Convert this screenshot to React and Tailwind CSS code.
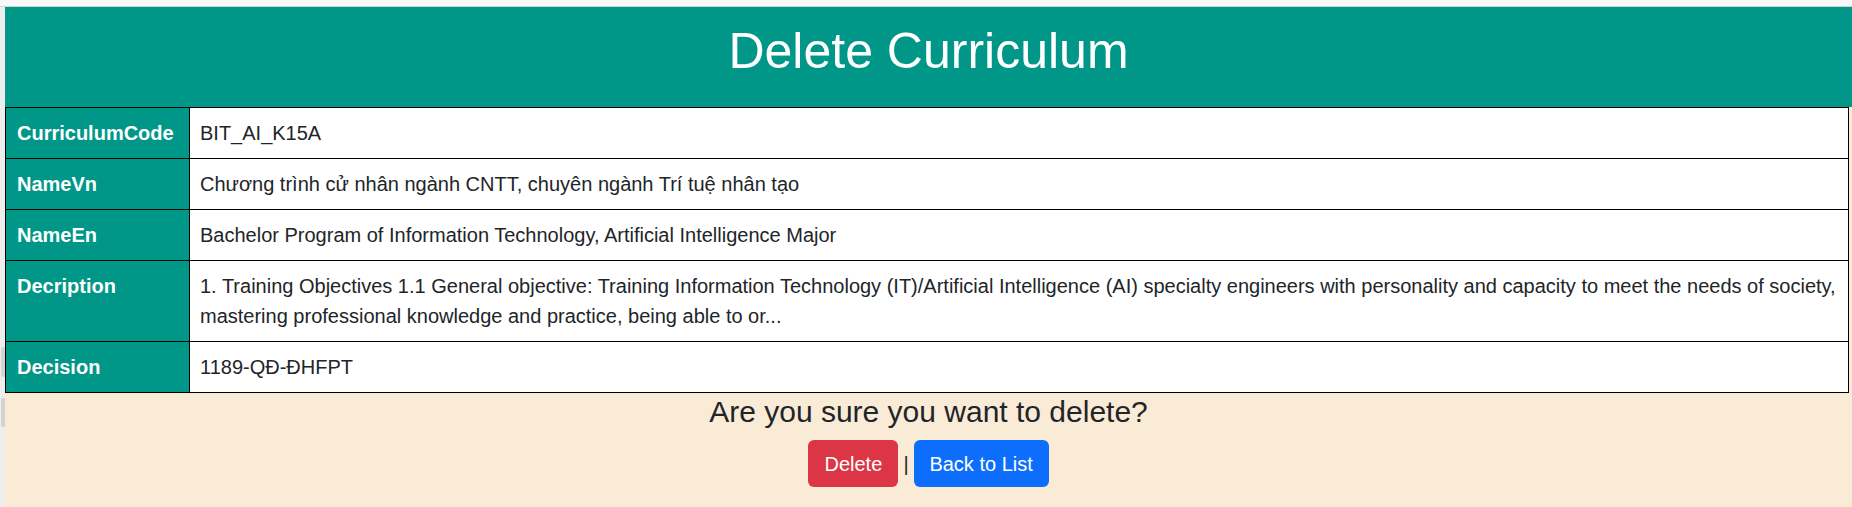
const rows = [
  { label: 'CurriculumCode', value: 'BIT_AI_K15A' },
  { label: 'NameVn', value: 'Chương trình cử nhân ngành CNTT, chuyên ngành Trí tuệ nhân tạo' },
  { label: 'NameEn', value: 'Bachelor Program of Information Technology, Artificial Intelligence Major' },
  {
    label: 'Decription',
    value:
      '1. Training Objectives 1.1 General objective: Training Information Technology (IT)/Artificial Intelligence (AI) specialty engineers with personality and capacity to meet the needs of society, mastering professional knowledge and practice, being able to or...',
  },
  { label: 'Decision', value: '1189-QĐ-ĐHFPT' },
]

const App = () => {
  return (
    <div
      className="flex h-[507px] w-[1852px] flex-col overflow-hidden bg-[#f0f0f0] text-[#212529]"
      style={{ fontFamily: '"Liberation Sans", Arial, sans-serif' }}
    >
      {/* browser chrome strip */}
      <div className="h-[7px] shrink-0 border-b border-[#d2d2d2] bg-[#f8f8f8]" />

      <div className="flex flex-1">
        <div className="flex w-[5px] shrink-0 flex-col bg-[#eeeeee]">
          <div className="ml-[1px] mt-[340px] h-[30px] w-[4px] rounded-l-[2px] bg-[#d4d4d4]" />
          <div className="ml-[1px] mt-[21px] h-[29px] w-[4px] rounded-l-[2px] bg-[#d4d4d4]" />
        </div>

        <div className="flex flex-1 flex-col bg-[#faebd7]">
          <div className="flex h-[100px] items-center justify-center bg-[#009688] pb-[12px] text-[50px] text-white">
            Delete Curriculum
          </div>

          <table className="w-[1844px] border-collapse border border-black text-[20px] leading-[30px]">
            <tbody>
              {rows.map(row => (
                <tr key={row.label}>
                  <th className="w-[184px] border border-black bg-[#009688] px-[11px] py-[10px] text-left align-top font-bold text-white">
                    {row.label}
                  </th>
                  <td className="border border-black bg-white px-[10px] py-[10px] align-top">
                    {row.value}
                  </td>
                </tr>
              ))}
            </tbody>
          </table>

          <div className="flex flex-col items-center">
            <div className="text-[30px] leading-[38px]">Are you sure you want to delete?</div>
            <div className="mt-[9px] flex items-center gap-[5px]">
              <button className="h-[47px] w-[90px] rounded-[6px] bg-[#dc3545] text-[20px] text-white">
                Delete
              </button>
              <span className="text-[20px] text-[#212529]">|</span>
              <button className="h-[47px] w-[135px] rounded-[6px] bg-[#0d6efd] text-[20px] text-white">
                Back to List
              </button>
            </div>
          </div>
        </div>
      </div>
    </div>
  )
}

export default App
